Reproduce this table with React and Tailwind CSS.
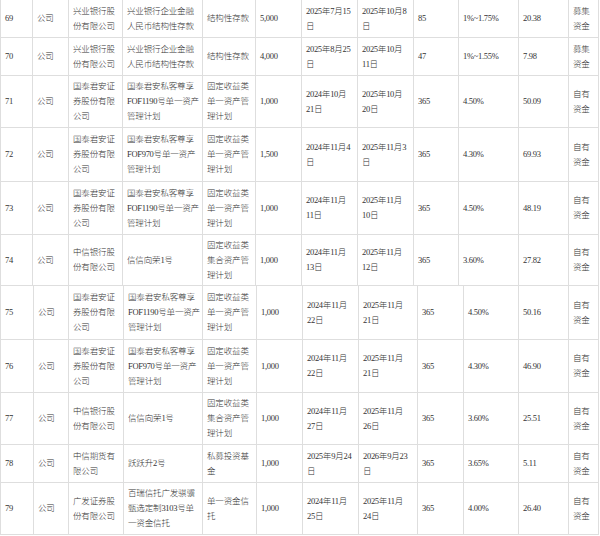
import React from 'react';

// column widths for the two stacked tables (they are laid out a little differently)
const colsA = ['w-[32px]', 'w-[36px]', 'w-[54px]', 'w-[80px]', 'w-[53px]', 'w-[46px]', 'w-[56px]', 'w-[56px]', 'w-[45px]', 'w-[60px]', 'w-[50px]', 'w-[30px]'];
const colsB = ['w-[33px]', 'w-[35px]', 'w-[55px]', 'w-[79px]', 'w-[54px]', 'w-[46px]', 'w-[56px]', 'w-[59px]', 'w-[46px]', 'w-[55px]', 'w-[50px]', 'w-[30px]'];

const gtja = ['国泰君安证', '券股份有限', '公司'];
const gtjaFof1190 = ['国泰君安私客尊享', 'FOF1190号单一资产', '管理计划'];
const gtjaFof970 = ['国泰君安私客尊享', 'FOF970号单一资产', '管理计划'];
const single = ['固定收益类', '单一资产管', '理计划'];
const collective = ['固定收益类', '集合资产管', '理计划'];
const citic = ['中信银行股', '份有限公司'];
const cib = ['兴业银行股', '份有限公司'];
const cibDeposit = ['兴业银行企业金融', '人民币结构性存款'];
const raised = ['募集', '资金'];
const own = ['自有', '资金'];

const tableA = [
    { h: 'h-[38px]', cells: ['69', '公司', cib, cibDeposit, '结构性存款', '5,000', ['2025年7月15', '日'], ['2025年10月8', '日'], '85', '1%~1.75%', '20.38', raised] },
    { h: 'h-[38px]', cells: ['70', '公司', cib, cibDeposit, '结构性存款', '4,000', ['2025年8月25', '日'], ['2025年10月', '11日'], '47', '1%~1.55%', '7.98', raised] },
    { h: 'h-[52px]', cells: ['71', '公司', gtja, gtjaFof1190, single, '1,000', ['2024年10月', '21日'], ['2025年10月', '20日'], '365', '4.50%', '50.09', own] },
    { h: 'h-[54px]', cells: ['72', '公司', gtja, gtjaFof970, single, '1,500', ['2024年11月4', '日'], ['2025年11月3', '日'], '365', '4.30%', '69.93', own] },
    { h: 'h-[53px]', cells: ['73', '公司', gtja, gtjaFof1190, single, '1,000', ['2024年11月', '11日'], ['2025年11月', '10日'], '365', '4.50%', '48.19', own] },
    { h: 'h-[51px]', cells: ['74', '公司', citic, '信信向荣1号', collective, '1,000', ['2024年11月', '13日'], ['2025年11月', '12日'], '365', '3.60%', '27.82', own] },
];

const tableB = [
    { h: 'h-[54px]', cells: ['75', '公司', gtja, gtjaFof1190, single, '1,000', ['2024年11月', '22日'], ['2025年11月', '21日'], '365', '4.50%', '50.16', own] },
    { h: 'h-[53px]', cells: ['76', '公司', gtja, gtjaFof970, single, '1,000', ['2024年11月', '22日'], ['2025年11月', '21日'], '365', '4.30%', '46.90', own] },
    { h: 'h-[52px]', cells: ['77', '公司', citic, '信信向荣1号', collective, '1,000', ['2024年11月', '27日'], ['2025年11月', '26日'], '365', '3.60%', '25.51', own] },
    { h: 'h-[38px]', cells: ['78', '公司', ['中信期货有', '限公司'], '跃跃升2号', ['私募投资基', '金'], '1,000', ['2025年9月24', '日'], ['2026年9月23', '日'], '365', '3.65%', '5.11', own] },
    { h: 'h-[52px]', cells: ['79', '公司', ['广发证券股', '份有限公司'], ['百瑞信托广发骐骥', '甄选定制3103号单', '一资金信托'], ['单一资金信', '托'], '1,000', ['2024年11月', '25日'], ['2025年11月', '24日'], '365', '4.00%', '26.40', own] },
];

// latin runs are set a touch tighter so mixed lines fit like the half-width original
const Line = ({ text }) => {
    const parts = text.split(/([\x20-\x7E]+)/).filter(Boolean);
    return (
        <div className="whitespace-nowrap leading-[15px]">
            {parts.map((p, i) =>
                /^[\x20-\x7E]+$/.test(p)
                    ? <span key={i} className="tracking-[-0.3px]">{p}</span>
                    : <span key={i}>{p}</span>
            )}
        </div>
    );
};

const Cell = ({ value }) => {
    const lines = Array.isArray(value) ? value : [value];
    return (
        <td className="border border-[#dedede] px-[4px] py-0 align-middle">
            {lines.map((line, i) => <Line key={i} text={line} />)}
        </td>
    );
};

const Table = ({ cols, rows }) => (
    <table className="table-fixed border-collapse w-[599px]">
        <colgroup>
            {cols.map((c, i) => <col key={i} className={c} />)}
        </colgroup>
        <tbody>
            {rows.map((row) => (
                <tr key={row.cells[0]} className={row.h}>
                    {row.cells.map((cell, i) => <Cell key={i} value={cell} />)}
                </tr>
            ))}
        </tbody>
    </table>
);

export default function App() {
    return (
        <div className="w-[600px] h-[536px] overflow-hidden bg-white text-[#333333] text-[8.5px] font-light tracking-[-0.15px] font-['Liberation_Serif','Noto_Sans_CJK_SC',serif]">
            <div className="-mt-px">
                <Table cols={colsA} rows={tableA} />
            </div>
            <div className="-mt-px">
                <Table cols={colsB} rows={tableB} />
            </div>
        </div>
    );
}
